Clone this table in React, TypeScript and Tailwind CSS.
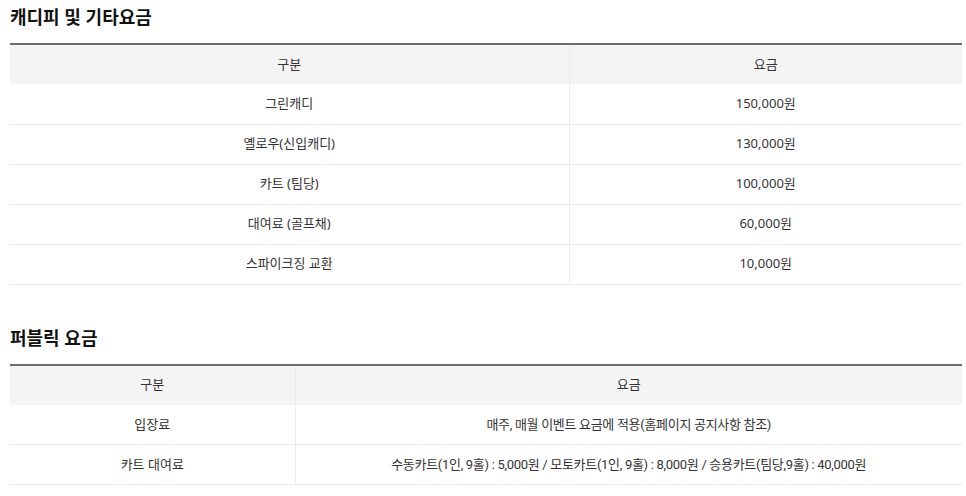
import React from 'react';

const caddie = [
  ['그린캐디', '150,000원'],
  ['옐로우(신입캐디)', '130,000원'],
  ['카트 (팀당)', '100,000원'],
  ['대여료 (골프채)', '60,000원'],
  ['스파이크징 교환', '10,000원'],
];

const publicFees = [
  ['입장료', '매주, 매월 이벤트 요금에 적용(홈페이지 공지사항 참조)'],
  ['카트 대여료', '수동카트(1인, 9홀) : 5,000원 / 모토카트(1인, 9홀) : 8,000원 / 승용카트(팀당,9홀) : 40,000원'],
];

function FeeTable({ rows, firstCol, priceClass }: { rows: string[][]; firstCol: string; priceClass?: string }) {
  return (
    <table className="w-full table-fixed border-collapse border-t-2 border-[#6b6b6b] text-[13px] text-[#333]">
      <colgroup>
        <col className={firstCol} />
        <col />
      </colgroup>
      <thead>
        <tr className="bg-[#f4f4f4]">
          <th className="h-10 border-r border-[#eaeaea] font-normal">구분</th>
          <th className="h-10 font-normal">요금</th>
        </tr>
      </thead>
      <tbody>
        {rows.map(([name, price]) => (
          <tr key={name} className="border-b border-[#ececec]">
            <td className="h-10 border-r border-[#ececec] text-center">{name}</td>
            <td className={`h-10 text-center ${priceClass ?? ''}`}>{price}</td>
          </tr>
        ))}
      </tbody>
    </table>
  );
}

export default function App() {
  return (
    <div
      className="w-[966px] h-[496px] bg-white pl-[10px] pr-[4px] overflow-hidden"
      style={{ fontFamily: "'Noto Sans', 'Noto Sans CJK KR', sans-serif" }}
    >
      <h2 className="pt-[4px] h-[43px] text-[18px] font-bold leading-[26px] text-[#111]">캐디피 및 기타요금</h2>
      <FeeTable rows={caddie} firstCol="w-[559px]" />
      <h2 className="mt-[40px] h-[39px] text-[18px] font-bold leading-[26px] text-[#111]">퍼블릭 요금</h2>
      <FeeTable
        rows={publicFees}
        firstCol="w-[285px]"
        priceClass="font-['Roboto','Noto_Sans_CJK_KR',sans-serif] tracking-[-0.3px]"
      />
    </div>
  );
}
